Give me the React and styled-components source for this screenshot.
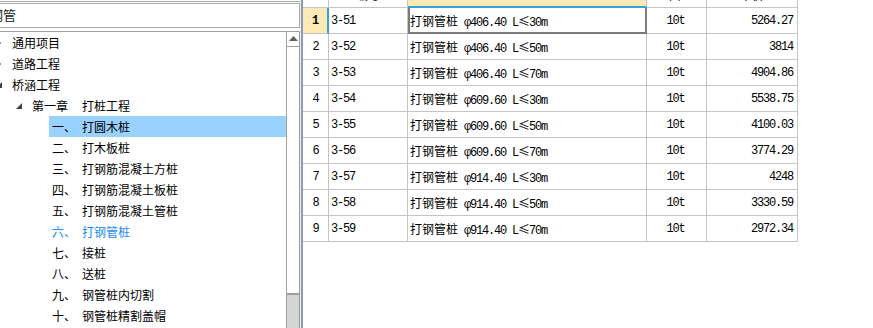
import React from 'react'
import styled, { createGlobalStyle } from 'styled-components'

const treeData = [
  { level: 0, icon: 'closed', label: '通用项目' },
  { level: 0, icon: 'closed', label: '道路工程' },
  { level: 0, icon: 'open', label: '桥涵工程' },
  { level: 1, icon: 'open', num: '第一章', label: '打桩工程' },
  { level: 2, num: '一、', label: '打圆木桩', selected: true },
  { level: 2, num: '二、', label: '打木板桩' },
  { level: 2, num: '三、', label: '打钢筋混凝土方桩' },
  { level: 2, num: '四、', label: '打钢筋混凝土板桩' },
  { level: 2, num: '五、', label: '打钢筋混凝土管桩' },
  { level: 2, num: '六、', label: '打钢管桩', active: true },
  { level: 2, num: '七、', label: '接桩' },
  { level: 2, num: '八、', label: '送桩' },
  { level: 2, num: '九、', label: '钢管桩内切割' },
  { level: 2, num: '十、', label: '钢管桩精割盖帽' },
]

const rows = [
  ['3-51', '406.40', '30', '5264.27'],
  ['3-52', '406.40', '50', '3814'],
  ['3-53', '406.40', '70', '4904.86'],
  ['3-54', '609.60', '30', '5538.75'],
  ['3-55', '609.60', '50', '4100.03'],
  ['3-56', '609.60', '70', '3774.29'],
  ['3-57', '914.40', '30', '4248'],
  ['3-58', '914.40', '50', '3330.59'],
  ['3-59', '914.40', '70', '2972.34'],
]

const Global = createGlobalStyle`
  html, body { margin: 0; padding: 0; background: #fff; }
  body {
    font-family: "Noto Sans CJK SC", "Liberation Sans", sans-serif;
    font-size: 12px;
    color: #000;
  }
`

const Expander = ({ type }) => {
  if (!type) return <IconBox />
  return (
    <IconBox>
      {type === 'closed' ? (
        <svg width="6" height="8" viewBox="0 0 6 8">
          <path d="M0.5 0.5 L5 4 L0.5 7.5 Z" fill="#fff" stroke="#8c8c8c" strokeWidth="1" />
        </svg>
      ) : (
        <svg width="6" height="6" viewBox="0 0 6 6">
          <path d="M6 0 L6 6 L0 6 Z" fill="#404040" />
        </svg>
      )}
    </IconBox>
  )
}

const App = () => {
  return (
    <>
      <Global />
      <Page>
        <LeftPanel>
          <SearchBar>
            <SearchBox>钢管</SearchBox>
          </SearchBar>
          <TreeBox>
            <TreeList>
              {treeData.map((t, i) => (
                <TreeRow key={i} level={t.level}>
                  <Expander type={t.icon} />
                  <Label selected={t.selected} active={t.active}>
                    {t.num && <Num level={t.level}>{t.num}</Num>}
                    {t.label}
                  </Label>
                </TreeRow>
              ))}
            </TreeList>
            <Scrollbar>
              <UpButton>
                <svg width="9" height="5" viewBox="0 0 9 5">
                  <path d="M4.5 0 L9 5 L0 5 Z" fill="#606060" />
                </svg>
              </UpButton>
              <Thumb />
              <Track />
            </Scrollbar>
          </TreeBox>
        </LeftPanel>
        <Splitter />
        <Grid>
          <HeadRow>
            <HeadCell w={26}></HeadCell>
            <HeadCell w={79}><HeadText>编号</HeadText></HeadCell>
            <HeadCell w={239} selected><HeadText>名称</HeadText></HeadCell>
            <HeadCell w={60}><HeadText>单位</HeadText></HeadCell>
            <HeadCell w={91}><HeadText>单价</HeadText></HeadCell>
          </HeadRow>
          {rows.map((r, i) => (
            <Row key={i}>
              <NumCell w={26} current={i === 0}><Mono>{i + 1}</Mono></NumCell>
              <Cell w={79}><Mono>{r[0]}</Mono></Cell>
              <Cell w={239} focused={i === 0}>
                <span>
                  打钢管桩<Mono> φ{r[1]} L</Mono><Sym>≤</Sym><Mono>{r[2]}m</Mono>
                </span>
              </Cell>
              <Cell w={60} align="center"><Mono>10t</Mono></Cell>
              <Cell w={91} align="flex-end"><Mono>{r[3]}</Mono></Cell>
            </Row>
          ))}
        </Grid>
      </Page>
    </>
  )
}

// layout
const Page = styled.div`
  display: flex;
  width: 873px;
  height: 328px;
  overflow: hidden;
`

const LeftPanel = styled.div`
  width: 300px;
  flex-shrink: 0;
  display: flex;
  flex-direction: column;
`

const SearchBar = styled.div`
  margin-top: 1px;
  border-top: 1px solid #a8a8a8;
  padding-top: 1px;
  height: 27px;
  box-sizing: border-box;
`

const SearchBox = styled.div`
  height: 25px;
  box-sizing: border-box;
  border: 1px solid #a8a8a8;
  border-left: none;
  background: #fff;
  font-size: 13px;
  line-height: 22px;
  text-indent: -10px;
  overflow: hidden;
  white-space: nowrap;
  color: #222;
`

const TreeBox = styled.div`
  margin-top: 3px;
  flex: 1;
  display: flex;
  border-top: 1px solid #a0a0a0;
  min-height: 0;
`

const TreeList = styled.div`
  flex: 1;
  overflow: hidden;
`

const TreeRow = styled.div`
  display: flex;
  align-items: center;
  height: 21px;
  padding-left: ${({ level }) => level * 20}px;
`

const IconBox = styled.div`
  width: 12px;
  margin-left: -7px;
  flex-shrink: 0;
  display: flex;
  align-items: center;
  justify-content: center;
`

const Label = styled.div`
  flex: 1;
  height: 21px;
  margin-left: 4px;
  padding-left: 3px;
  display: flex;
  align-items: center;
  white-space: nowrap;
  background: ${({ selected }) => (selected ? '#99d1ff' : 'transparent')};
  color: ${({ active }) => (active ? '#1a8cf0' : '#000')};
`

const Num = styled.span`
  display: inline-block;
  width: ${({ level }) => (level === 1 ? 50 : 30)}px;
`

const Scrollbar = styled.div`
  width: 14px;
  flex-shrink: 0;
  display: flex;
  flex-direction: column;
  border-left: 1px solid #a0a0a0;
  border-right: 1px solid #9a9a9a;
  box-sizing: border-box;
`

const UpButton = styled.div`
  height: 15px;
  box-sizing: border-box;
  border-bottom: 1px solid #a0a0a0;
  display: flex;
  align-items: center;
  justify-content: center;
  padding-bottom: 2px;
  background: #fff;
`

const Thumb = styled.div`
  height: 248px;
  box-sizing: border-box;
  background: #fff;
  border-bottom: 2px solid #a0a0a0;
`

const Track = styled.div`
  flex: 1;
  background: #d4d4d4;
`

const Splitter = styled.div`
  width: 3px;
  flex-shrink: 0;
  box-sizing: border-box;
  border-left: 1px solid #eef0f3;
  background: #8c9bb0;
`

const Grid = styled.div`
  flex: 1;
  display: flex;
  flex-direction: column;
  background: #fff;
`

const HeadRow = styled.div`
  display: flex;
  height: 8px;
  overflow: hidden;
`

const HeadCell = styled.div`
  width: ${({ w }) => w}px;
  flex-shrink: 0;
  box-sizing: border-box;
  border-right: 1px solid #c4c4c4;
  border-bottom: ${({ selected }) => (selected ? '2px solid #36a3d8' : '1px solid #c4c4c4')};
  background: ${({ selected }) => (selected ? '#fde9b6' : '#fff')};
  display: flex;
  align-items: flex-end;
  justify-content: center;
  overflow: hidden;
`

const HeadText = styled.span`
  font-size: 12px;
  line-height: 14px;
  margin-bottom: 5px;
  white-space: nowrap;
`

const Row = styled.div`
  display: flex;
  height: 26px;
`

const Cell = styled.div`
  width: ${({ w }) => w}px;
  flex-shrink: 0;
  box-sizing: border-box;
  border-right: 1px solid #c4c4c4;
  border-bottom: 1px solid #c4c4c4;
  display: flex;
  align-items: center;
  justify-content: ${({ align }) => align || 'flex-start'};
  padding: 0 4px 0 2px;
  white-space: nowrap;
  box-shadow: ${({ focused }) =>
    focused ? 'inset 2px 0 0 #7a7a7a, inset -1px 0 0 #7a7a7a, inset 0 -1px 0 #7a7a7a' : 'none'};
  ${({ focused }) => focused && 'border-bottom-color: #7a7a7a; border-right-color: #7a7a7a;'}
`

const NumCell = styled(Cell)`
  justify-content: center;
  padding: 0;
  background: ${({ current }) => (current ? '#fde9b6' : '#fff')};
  border-right: ${({ current }) => (current ? '2px solid #36a3d8' : '1px solid #c4c4c4')};
  font-weight: ${({ current }) => (current ? 'bold' : 'normal')};
`

const Mono = styled.span`
  font-family: "Liberation Mono", "DejaVu Sans Mono", monospace;
  font-size: 12px;
  letter-spacing: -1.2px;
  white-space: pre;
`

const Sym = styled.span`
  font-family: "Noto Sans CJK SC", sans-serif;
  font-size: 12px;
  display: inline-block;
  width: 11px;
  text-align: center;
`

export default App
